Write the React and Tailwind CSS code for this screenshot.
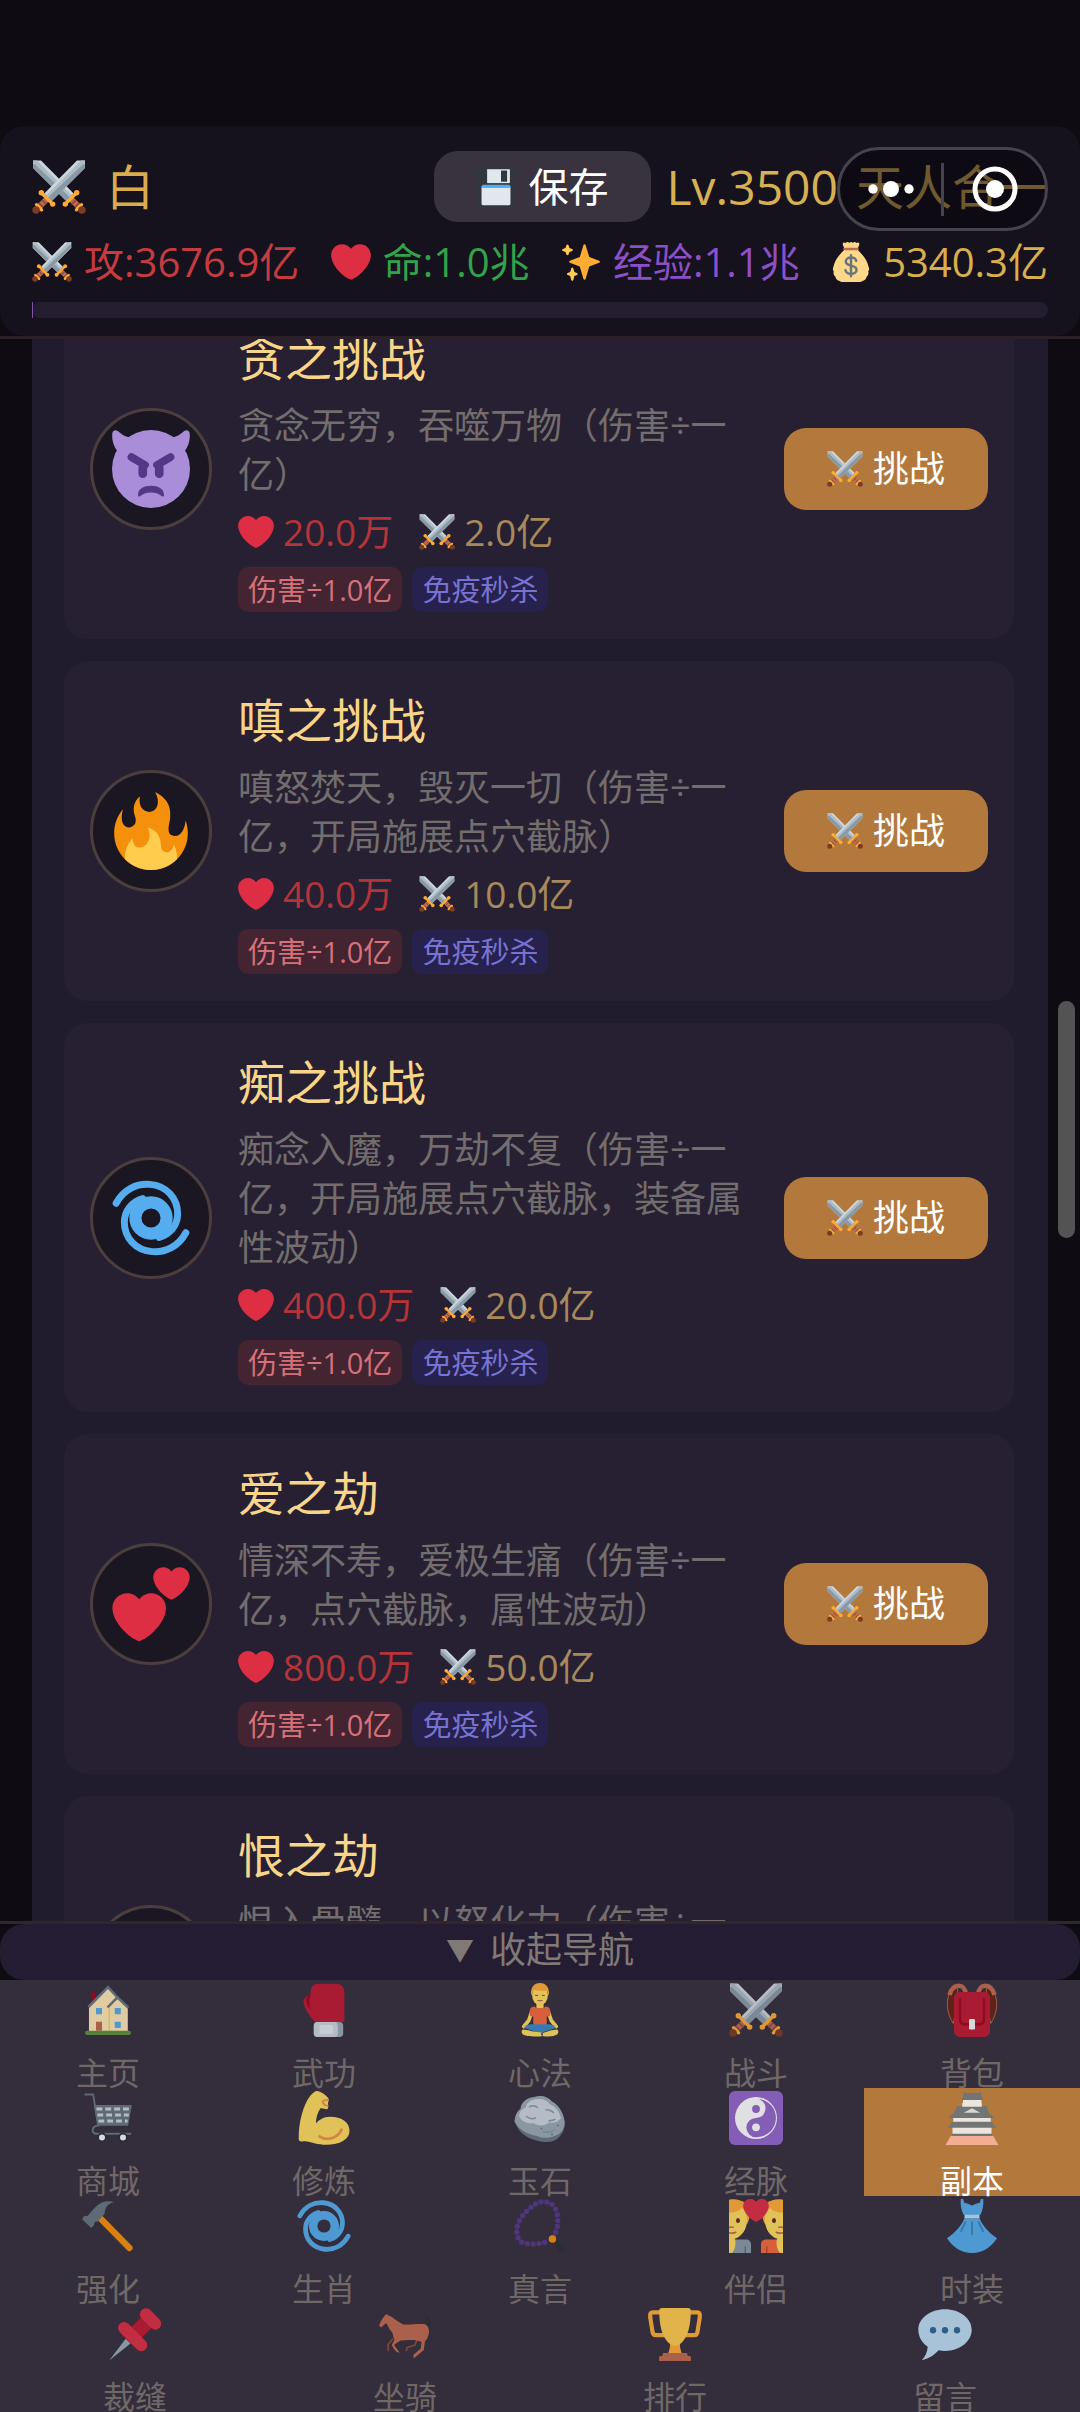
import React from "react";

const HEART =
  "M35.885 11.833c0-5.45-4.418-9.868-9.867-9.868-3.308 0-6.227 1.633-8.018 4.129-1.791-2.496-4.71-4.129-8.017-4.129-5.45 0-9.868 4.417-9.868 9.868 0 .772.098 1.52.266 2.241C1.751 22.587 11.216 31.568 18 34.034c6.783-2.466 16.249-11.447 17.617-19.959.17-.721.268-1.469.268-2.242z";

const Emoji = ({ className, children }) => (
  <svg viewBox="0 0 36 36" aria-hidden="true" className={"shrink-0 " + className}>
    {children}
  </svg>
);

const OneSword = () => (
  <>
    <path fill="#ccd6dd" d="M.7.3H6l21.8 22-5 5L.7 5.4z" />
    <path fill="#8899a6" d="M.7 5.4V3l2-1 22.6 22.8-2.5 2.5z" />
    <path fill="#aebbc5" d="M.7.3h2.6L26.5 23.6l-1.2 1.2L.7 1.6z" />
    <path stroke="#bf6952" strokeWidth="4" d="m26 26 6 6" />
    <path stroke="#8a4b38" strokeWidth="1" d="m26.4 29.6 3-3M28.6 31.6l3-3" />
    <path stroke="#ffac33" strokeWidth="2.2" strokeLinecap="round" d="m22.3 29.3 7.3-7.3M29.6 33.2l3.4-3.4" />
    <circle cx="22.2" cy="29.4" r="1.8" fill="#ffac33" />
    <circle cx="29.8" cy="21.8" r="1.8" fill="#ffac33" />
    <circle cx="33.3" cy="33.3" r="2.5" fill="#7c3b25" />
  </>
);

const Swords = ({ className }) => (
  <Emoji className={className}>
    <OneSword />
    <g transform="translate(36) scale(-1 1)">
      <OneSword />
    </g>
  </Emoji>
);

const Heart = ({ className }) => (
  <Emoji className={className}>
    <path fill="#dd2e44" d={HEART} />
  </Emoji>
);

const Sparkles = ({ className }) => (
  <Emoji className={className}>
    <path fill="#FFAC33" d="M34.347 16.893l-8.899-3.294-3.323-10.891c-.128-.42-.517-.708-.956-.708-.439 0-.828.288-.956.708l-3.322 10.891-8.9 3.294c-.393.146-.653.519-.653.938 0 .418.26.793.653.938l8.895 3.293 3.324 11.223c.126.424.516.715.959.715.442 0 .833-.291.959-.716l3.324-11.223 8.896-3.293c.391-.144.652-.518.652-.937 0-.418-.261-.792-.653-.938z" />
    <path fill="#FFCC4D" d="M14.347 27.894l-2.314-.856-.9-3.3c-.118-.436-.513-.738-.964-.738-.451 0-.846.302-.965.737l-.9 3.3-2.313.856c-.393.146-.653.52-.653.938 0 .418.26.793.653.938l2.301.853.907 3.622c.112.444.511.756.97.756.459 0 .858-.312.97-.757l.907-3.622 2.301-.853c.393-.144.653-.519.653-.937 0-.418-.26-.793-.653-.937zM10.009 6.231l-2.364-.875-.876-2.365c-.145-.393-.519-.653-.938-.653-.418 0-.792.26-.938.653l-.875 2.365-2.365.875c-.393.146-.653.52-.653.938 0 .418.26.793.653.938l2.365.875.875 2.365c.146.393.52.653.938.653.418 0 .792-.26.938-.653l.875-2.365 2.365-.875c.393-.146.653-.52.653-.938 0-.418-.26-.792-.653-.938z" />
  </Emoji>
);

const MoneyBag = ({ className }) => (
  <Emoji className={className}>
    <path fill="#fdd888" d="M12 7C8 11 3.400 16 2.300 22c-.8 1.500-.9 3.200.2 4.500-.6 2 0 3.800 1.500 4.800.2 2 1.700 3.500 3.800 3.700C9 36 10.500 36 12 36h12c1.500 0 3 0 4.200-1 2.100-.2 3.600-1.700 3.800-3.700 1.500-1 2.100-2.800 1.500-4.800 1.100-1.300 1-3 .2-4.500C32.600 16 28 11 24 7z" />
    <path fill="#fdd888" d="M12 6 10.600 2.200C10.300.6 12 0 13.200 1c.9-1.200 2.500-1.200 3.300-.2.8-1 2.300-1 3.100 0 .8-1 2.400-1 3.300.2 1.200-1 2.900-.4 2.600 1.200L24 6z" />
    <rect x="11" y="5.200" width="14" height="2.300" rx="1.100" fill="#bf6952" />
    <path fill="none" stroke="#67757f" strokeWidth="2.200" strokeLinecap="round" d="M22.700 17c-.5-1.900-2.300-3-4.700-3-2.700 0-4.700 1.400-4.700 3.600 0 5 9.700 2.400 9.700 7.400 0 2.200-2.200 3.700-5 3.700-2.700 0-4.600-1.300-5-3.400M18 12v18.800" />
  </Emoji>
);

const Floppy = ({ className }) => (
  <Emoji className={className}>
    <rect width="36" height="36" rx="3" fill="#31373d" />
    <path fill="#e1e8ed" d="M10 2h20.500v12.500H10z" />
    <path fill="#31373d" d="M22.500 3.200H28v10h-5.500z" />
    <path fill="#e1e8ed" d="M5 17.500h26V33a1.500 1.500 0 0 1-1.500 1.500h-23A1.500 1.500 0 0 1 5 33z" />
    <path fill="#55acee" d="M6.500 16h23a1.500 1.500 0 0 1 1.500 1.500V19H5v-1.500A1.500 1.500 0 0 1 6.500 16z" />
  </Emoji>
);

const Imp = ({ className }) => (
  <Emoji className={className}>
    <g fill="#aa8dd8">
      <circle cx="18" cy="18" r="18" />
      <path d="M2.600 10C.4 7-.2 4 .2 1.300.5-.1 1.900-.2 2.800.6 4.300 2 6 3 8 3.500z" />
      <path d="M33.400 10c2.200-3 2.800-6 2.400-8.700-.3-1.400-1.700-1.500-2.600-.7C31.700 2 30 3 28 3.500z" />
    </g>
    <g fill="none" stroke="#553788" strokeLinecap="round">
      <path strokeWidth="3.600" d="m9 12.500 6.200 3.700M27 12.500l-6.200 3.700" />
      <path strokeWidth="4" d="M14.200 17.500v2.700M21.800 17.500v2.700" />
    </g>
    <path fill="#553788" d="M12 30.100c0-3.200 2.800-4.400 6-4.400s6 1.200 6 4.400c0 .8-.8.7-1.300.3-1.300-1-2.700-1.500-4.700-1.500s-3.400.5-4.700 1.500c-.5.4-1.300.5-1.300-.3z" />
  </Emoji>
);

const Fire = ({ className }) => (
  <Emoji className={className}>
    <path fill="#F4900C" d="M35 19c0-2.062-.367-4.039-1.04-5.868-.46 5.389-3.333 8.157-6.335 6.868-2.812-1.208-.917-5.917-.777-8.164.236-3.809-.012-8.169-6.931-11.794 2.875 5.500.333 8.917-2.333 9.125-2.958.231-5.667-2.542-4.667-7.042-3.238 2.386-3.332 6.402-2.333 9 1.042 2.708-.042 4.958-2.583 5.208-2.840.280-4.418-3.041-2.963-8.333C2.520 10.965 1 14.805 1 19c0 9.389 7.611 17 17 17s17-7.611 17-17z" />
    <path fill="#FFCC4D" d="M28.394 23.999c.148 3.084-2.561 4.293-4.019 3.709-2.106-.843-1.541-2.291-2.083-5.291s-2.625-5.083-5.708-6c2.250 6.333-1.247 8.667-3.080 9.084-1.872.426-3.753-.001-3.968-4.007C7.352 23.668 6 26.676 6 30c0 .368.023.730.055 1.090C9.125 34.124 13.342 36 18 36s8.875-1.876 11.945-4.910c.032-.360.055-.722.055-1.090 0-2.187-.584-4.236-1.606-6.001z" />
  </Emoji>
);

const Cyclone = ({ className }) => (
  <Emoji className={className}>
    <g fill="none" stroke="#55acee" strokeLinecap="round">
      <circle cx="18" cy="18" r="7.200" strokeWidth="5.600" />
      <path strokeWidth="3.200" d="M1.900 11.200C5.500 4.600 11.500 2 17.500 2.500c7.800.6 12.800 6.500 12.800 13.500 0 5.500-3.600 9.600-8.500 11" />
      <path strokeWidth="3.200" d="M34.100 24.800C30.500 31.400 24.500 34 18.500 33.500 10.700 32.900 5.700 27 5.700 20c0-5.500 3.600-9.600 8.500-11" />
    </g>
  </Emoji>
);

const TwoHearts = ({ className }) => (
  <Emoji className={className}>
    <path fill="#dd2e44" transform="translate(.1 11.700) scale(.692)" d={HEART} />
    <path fill="#dd2e44" transform="translate(19 .1) scale(.470)" d={HEART} />
  </Emoji>
);

const BrokenHeart = ({ className }) => (
  <Emoji className={className}>
    <path fill="#dd2e44" d={HEART} />
    <path fill="none" stroke="#1a1722" strokeWidth="2" d="m18 6-4 7 7 5-6 6 3 10" />
  </Emoji>
);

const House = ({ className }) => (
  <Emoji className={className}>
    <path fill="#a0041e" d="M6.800 6.200h3V12h-3z" />
    <path fill="#ffe8b6" d="M5.300 15 18 2.800l7 7 6.200 6V32H5.300z" />
    <path fill="#ffcc4d" d="M18.400 16.500h.9V32h-.9z" />
    <path fill="none" stroke="#66757f" strokeWidth="1.700" d="M4.900 16 18 2.800l6.200 6.700M17.700 16.300l6.600-6.800 7.300 7" />
    <path fill="#55acee" d="M10 16.700h4v4.200h-4zM22.500 16.700h4v4.200h-4zM22.500 25.800h4V30h-4z" />
    <path fill="#c1694f" d="M10 25.800h4v6h-4z" />
    <rect x="2.700" y="31.800" width="30.600" height="2.900" rx="1.400" fill="#5c913b" />
  </Emoji>
);

const Glove = ({ className }) => (
  <Emoji className={className}>
    <path fill="#be1931" d="M9 6.500C9 2.500 11 .5 14 .5h12c3.600 0 5.600 2.200 5.600 6V26H12C9 23 5.500 18 4.400 13.500 4 11 5.500 8.500 9 8z" />
    <path fill="#a0041e" d="M9 8c-1 3-1 7 0 10-1.800-2-3.300-5.500-2.800-8C6.800 8.800 7.800 8 9 8z" />
    <rect x="11.200" y="26" width="19.600" height="10" rx="2.500" fill="#99aab5" />
    <rect x="11.200" y="26" width="16" height="10" rx="2.500" fill="#ccd6dd" />
    <rect x="15" y="28" width="9" height="6" rx="1" fill="#e1e8ed" />
  </Emoji>
);

const Lotus = ({ className }) => (
  <Emoji className={className}>
    <path fill="#ffdc5d" d="M15.600 12h4.800v5h-4.800z" />
    <path fill="none" stroke="#ffdc5d" strokeWidth="2.500" strokeLinecap="round" strokeLinejoin="round" d="m12.500 19-2 6-3.300 4M23.500 19l2 6 3.300 4" />
    <path fill="#f4683c" d="M11.200 18.500c0-2 1.300-2.900 3.200-2.900 1 1.400 6.200 1.400 7.200 0 1.900 0 3.200.9 3.200 2.900V22l-2.300.3V29h-9v-6.700l-2.300-.3z" />
    <path fill="#3b88c3" d="M13 27.500h10c3 0 5 1 5.500 2.500L18 33.500 7.500 30c.5-1.500 2.500-2.500 5.500-2.500z" />
    <path fill="#ffdc5d" d="M6.500 31c2 .2 4 .4 6 1.200l6.500.8c1.500.4 1.200 2.700-.8 2.700-4 .1-9.500-.2-11.200-1.200-1.600-1-1.600-2.500-.5-3.500zM29.500 31c-2 .2-4 .4-6 1.200l-5 1.500c.2 1.200 1.500 2 3 2 3 0 6.200-.3 7.500-1.200 1.600-1 1.600-2.500.5-3.500z" />
    <ellipse cx="18" cy="8" rx="5.300" ry="6.800" fill="#ffdc5d" />
    <path fill="#ffac33" d="M12 8.500C11.500 3 14 0 18 0s6.500 3 6 8.500c-.7-1.500-1.300-3-1.500-3.700-2.500.7-6 .5-8.300-.3-.7 1-1.500 2.500-2.200 4z" />
    <path fill="none" stroke="#65471b" strokeWidth=".6" d="M14.800 8.300h1.900M19.300 8.300h1.900" />
    <path fill="#c1694f" d="M16 11.300h4c-.5 1.300-3.500 1.300-4 0z" />
  </Emoji>
);

const Backpack = ({ className }) => (
  <Emoji className={className}>
    <path fill="#662113" stroke="#c1694f" strokeWidth=".6" d="M8 2C1 5-1 17 5.500 27L9 10zM28 2c7 3 9 15 2.500 25L27 10z" />
    <path fill="none" stroke="#c1694f" strokeWidth="3" d="M3 8c1-4 3-6.200 6-6.200 3.500 0 4.500 2.200 5 6M33 8c-1-4-3-6.200-6-6.200-3.500 0-4.500 2.200-5 6" />
    <rect x="6" y="6" width="24" height="30" rx="4" fill="#be1931" />
    <path fill="none" stroke="#a0041e" strokeWidth="1.600" d="M10 10v14c0 2.300 1 3.500 3 3.500h10c2 0 3-1.200 3-3.500V10" />
    <rect x="16" y="24" width="4" height="7" rx=".8" fill="#f5f8fa" />
  </Emoji>
);

const Cart = ({ className }) => (
  <Emoji className={className}>
    <path fill="none" stroke="#66757f" strokeWidth="1.300" d="M2.300 2.300h5.800L11.500 23c-4.500.3-5 5.500-1 5.500h23" />
    <path fill="#66757f" d="M8.500 9.300h25.400l-2.500 13.800H11z" />
    <path stroke="#ccd6dd" strokeWidth="2.100" strokeDasharray="3.900 2" d="M10.300 12h22M10.900 16h21M11.600 20h19.500" />
    <g fill="#f5f8fa" stroke="#292f33" strokeWidth="1.200">
      <circle cx="14" cy="31" r="2.600" />
      <circle cx="28" cy="31" r="2.600" />
    </g>
  </Emoji>
);

const Muscle = ({ className }) => (
  <Emoji className={className}>
    <path fill="#ffdc5d" d="M13.800 0c2.500.6 5 2.300 7 4.600.8 1-.1 2.600-.1 3.900 0 1.300.5 2.200-.5 3.600-1 .4-2.700-.7-4.600-.5-1.800 2.500-3 6-3 10 1.700-2.200 5-4.500 9.500-4.500C29.500 17.100 35 20.500 35 26.500c0 6-6.500 9.300-15.500 9.300-5.500 0-10-1.800-13-2.200-2.500-.3-4.300.6-5.300-1C.7 24 3.500 9.500 9 3 10.500 1.400 12.200-.3 13.800 0z" />
    <path fill="none" stroke="#ef9645" strokeWidth="1.900" strokeLinecap="round" d="M15 30.300c5.500 3.300 12 1.200 14.700-4.500" />
    <path fill="none" stroke="#ef9645" strokeWidth="1.200" strokeLinecap="round" d="M20.500 6c-1.500 0-3 .3-3.500 1.200.7 1.700 2 2.500 3.400 2.700" />
  </Emoji>
);

const Rock = ({ className }) => (
  <Emoji className={className}>
    <path fill="#66757f" d="M1.500 20c1 7 7 11 14 13 6 1.800 12 1.500 15-2 3-3 4.500-7 4-11L20 14z" />
    <path fill="#9aaab4" d="M1 20.500c.3-4 1.500-7 4-8.500 0-4 4-7.500 9-8 5-1.500 9-.5 12 3 4 2 7.500 7 8.300 12.500.4 5-1.800 8-4.300 9.500-5 2.500-10 3-14 1-6-1-12-4-15-9.500z" />
    <path fill="#ccd6dd" d="M4 17c.5-4 2-5 4.500-6 .5-3.500 3.500-5 7-5.500 4-.8 7 .5 9 3.300 4 1.700 6.500 5 7.500 9.200-2 3-5 3.500-8 3-3 2.500-7 2.500-10 .5-4 .5-8-1-10-4.500z" />
    <path fill="none" stroke="#8899a6" strokeWidth="1" strokeLinecap="round" d="M11 10.500c2-1 4-.7 5.500.5M22 12.500c2.500 0 4 .8 5 2M9 17c2 1.500 4 1.800 6 1M20 27c3 1 6 .5 8-1.500M24 20l4-1" />
    <g fill="#66757f">
      <circle cx="19" cy="25" r=".6" />
      <circle cx="30" cy="23" r=".6" />
      <circle cx="26" cy="29" r=".6" />
    </g>
  </Emoji>
);

const YinYang = ({ className }) => (
  <Emoji className={className}>
    <rect width="36" height="36" rx="4" fill="#9266cc" />
    <circle cx="18" cy="18" r="14" fill="#fff" />
    <path fill="#9266cc" d="M20 5.300A12.800 12.800 0 0 1 18 30.800 6.400 6.400 0 0 1 18 18a6.400 6.400 0 0 0 3.300-11.800z" />
    <circle cx="18" cy="12" r="2.600" fill="#9266cc" />
    <circle cx="18" cy="24.200" r="2.600" fill="#fff" />
  </Emoji>
);

const Castle = ({ className }) => (
  <Emoji className={className}>
    <path fill="#f5f8fa" d="M12 5.500h12.300v6H12zM5.500 17h25v4h-25zM5 24h26v6H5z" />
    <path fill="#66757f" d="m12.800 0 1 1.300h9l1-1.300.3 2 1.500 4H11l1.500-4zM8 10h20l1 4.500 4 3.500H2l4-3.500zM5 20.500h26l3.300 4H1.700zM4.500 28.500h27V30h-27z" />
    <path fill="#f5f8fa" d="M11.500 8h13v2.500h-13z" />
    <path fill="#e1e8ed" d="m12.500 14.500 5.500-3 5.500 3z" />
    <path fill="#ffb7a0" d="M3.800 30h28.400l3.400 6H.4z" />
  </Emoji>
);

const Hammer = ({ className }) => (
  <Emoji className={className}>
    <path stroke="#f4900c" strokeWidth="4.200" strokeLinecap="round" d="M13 13 32.300 32.700" />
    <path fill="#66757f" d="M22 2.400c-3.500.2-6 3-6.300 7.600l-4.500 5-2 .3-.6 2.200-1.700 1.800L.8 13.700l1-2.200 2.700-.3C7 8 10 4.500 13 2.800c3-1.600 7-1.700 9-.4z" />
  </Emoji>
);

const Beads = ({ className }) => (
  <Emoji className={className}>
    <path fill="none" stroke="#553788" strokeWidth="3.600" strokeLinecap="round" strokeDasharray="0 3.900" d="M26.500 25.500C31 20 30.500 10 28 6 25 1 18.500.6 14 4 9 7.500 3 14 2.500 20c-.2 5 1.500 8.700 5 9.500 5.500 1 12 .5 16.500-1.500" />
    <path fill="#292f33" d="m27.500 28.500 2-2 5.800 6.500c-.5 1.800-2 3-4.500 2.500z" />
    <circle cx="26.300" cy="26.700" r="2.500" fill="#f4900c" />
  </Emoji>
);

const CoupleHalf = ({ shirt }) => (
  <>
    <path fill="#ffac33" d="M0 .5C7-.8 13.500 2.500 13.800 9c.1 4-.8 6-2 8L0 12z" />
    <path fill="#ffdc5d" d="M0 9c4 0 7-1 8.500-3 3 2 4 6 3.300 10.500C11 22 7 26 3.500 26.500L0 27z" />
    <path fill={shirt} d="M0 27h11c2.500 0 3.700 1.300 3.700 3.500V36H0z" />
    <path fill="#ffdc5d" d="M0 24c2.500.5 4 1.500 4.300 4 .2 3-.3 6-2.300 8H0z" />
    <ellipse cx="6" cy="14.300" rx="1.300" ry="1.700" fill="#662113" />
    <path fill="none" stroke="#c1694f" strokeWidth="1.100" d="M0 18.800h3.200M0 22.500c2 .5 3.500.3 4.800-.5" />
    <path stroke="#00000055" strokeWidth=".8" d="M10.800 31.500V36" />
  </>
);

const Couple = ({ className }) => (
  <Emoji className={className}>
    <CoupleHalf shirt="#8899a6" />
    <g transform="translate(36) scale(-1 1)">
      <CoupleHalf shirt="#f4683c" />
    </g>
    <path fill="#dd2e44" transform="translate(9.400 -1) scale(.478)" d={HEART} />
  </Emoji>
);

const Dress = ({ className }) => (
  <Emoji className={className}>
    <path fill="#55acee" d="M10.500 0h1.600l.8 2.600c2 .2 3.800.8 5.100 1.900 1.300-1.100 3.100-1.700 5.100-1.900l.8-2.600h1.600c.4 4-.4 7.600-2 10.700h-11C10.900 7.600 10.100 4 10.500 0z" />
    <path fill="#bdddf4" d="M13 10.500h10v2.600H13z" />
    <path fill="#55acee" d="M13 13h10c2.500 5.300 6.700 9.800 11.700 13.200C30.500 32.500 25 36 18 36S5.500 32.500 1.300 26.200C6.300 22.800 10.500 18.300 13 13z" />
    <path fill="none" stroke="#3b88c3" strokeWidth="1.300" strokeLinecap="round" d="M18 15.500v8M13.500 15.500l-2.800 6M22.500 15.500l2.800 6" />
  </Emoji>
);

const Pushpin = ({ className }) => (
  <Emoji className={className}>
    <path fill="#99aab5" d="m.8 35.700 11-14.500 3.200 3.200z" />
    <path stroke="#be1931" strokeWidth="10" d="m16.500 19.500 11-11" />
    <path stroke="#dd2e44" strokeWidth="8" strokeLinecap="round" d="m10.700 14 11.500 11.500M25.300 4.800l6.200 6.300" />
  </Emoji>
);

const Horse = ({ className }) => (
  <Emoji className={className}>
    <path fill="#292f33" d="M30.500 12c2.500-1 1.500-4 .8-8 2.500 2 4.700 5 3.700 9zM5 4.500 4 7l5 5 1-1.500z" />
    <path fill="none" stroke="#8a4b38" strokeWidth="1.200" d="m10 21-3.200 4v4.500M26 22l-1.500 3.500-5 1.500-.7 2.500" />
    <path fill="#c1694f" d="M5.500 4.700C4 6 2 9 .7 12.300L2 13.700l3.500-3c1.200 2 2 4.500 4 6.300.7 2.200.7 3.500 1.500 4.800l-1.800 3.400c.5 1.800 2 3.500 3.300 4.800l2 .5c-1-1.800-3-3.500-3.700-5.300l4.200-2.800c3.500-.6 7-.5 10-.3l4 1-.5 4.500-5 4.400.4 2.300 6.600-5.700.8-5.600c2-2 3-5.500 2.600-8-.5-2.500-2-3.700-4-3.700-4.800-.2-9 .8-13 .3C12 9.500 10 6.500 7 5.700z" />
  </Emoji>
);

const Trophy = ({ className }) => (
  <Emoji className={className}>
    <path fill="none" stroke="#ffac33" strokeWidth="2.800" d="M9.500 3.600H3.300C1.200 3.600 1.400 5 1.500 7l1.600 10c.3 1.300 1 1.700 2 1.700h7M26.500 3.600h6.200c2.100 0 1.900 1.400 1.800 3.400l-1.600 10c-.3 1.300-1 1.700-2 1.700h-7" />
    <path fill="#ffac33" d="M14.500 23h7c-.7 3 .2 5.800 1.300 8.500h-9.600c1.100-2.700 2-5.500 1.300-8.500z" />
    <path fill="#ffcc4d" d="M7.500 2.500C7.500 1.200 8.300.7 9.500.7h17c1.200 0 2 .5 2 1.800 0 9-1.500 18-7.500 22.500-2 1-4 1-6 0C9 20.500 7.500 11.500 7.500 2.500z" />
    <path fill="#c1694f" d="M10 30.700h16l.5 2h1.200c.6 0 .9.400.9 1V36H7.400v-2.300c0-.6.3-1 .9-1h1.200z" />
  </Emoji>
);

const Speech = ({ className }) => (
  <Emoji className={className}>
    <path fill="#bdddf4" d="M18 1.500c9.900 0 17.800 6 17.800 13.700S27.900 29.300 18 29.300c-1.500 0-3-.1-4.300-.4C11 32 7 34.800 2.500 35.500 5 33 6.200 30 6.500 26.500 2.700 24 .2 19.800.2 15.200.2 7.500 8.100 1.500 18 1.500z" />
    <g fill="#2a6797">
      <circle cx="10" cy="15.500" r="2.100" />
      <circle cx="18" cy="15.500" r="2.100" />
      <circle cx="26" cy="15.500" r="2.100" />
    </g>
  </Emoji>
);

const stats = [
  { Icon: Swords, text: "攻:3676.9亿", color: "text-[#c53c40]" },
  { Icon: Heart, text: "命:1.0兆", color: "text-[#34a24b]" },
  { Icon: Sparkles, text: "经验:1.1兆", color: "text-[#8b50c6]" },
  { Icon: MoneyBag, text: "5340.3亿", color: "text-[#d8af4d]" },
];

const challenges = [
  { Icon: Imp, title: "贪之挑战", desc: "贪念无穷，吞噬万物（伤害÷一亿）", hp: "20.0万", atk: "2.0亿" },
  { Icon: Fire, title: "嗔之挑战", desc: "嗔怒焚天，毁灭一切（伤害÷一亿，开局施展点穴截脉）", hp: "40.0万", atk: "10.0亿" },
  { Icon: Cyclone, title: "痴之挑战", desc: "痴念入魔，万劫不复（伤害÷一亿，开局施展点穴截脉，装备属性波动）", hp: "400.0万", atk: "20.0亿" },
  { Icon: TwoHearts, title: "爱之劫", desc: "情深不寿，爱极生痛（伤害÷一亿，点穴截脉，属性波动）", hp: "800.0万", atk: "50.0亿" },
  { Icon: BrokenHeart, title: "恨之劫", desc: "恨入骨髓，以怒化力（伤害÷一亿，点穴截脉，属性波动）", hp: "1600.0万", atk: "100.0亿" },
];

const nav = [
  [House, "主页"],
  [Glove, "武功"],
  [Lotus, "心法"],
  [Swords, "战斗"],
  [Backpack, "背包"],
  [Cart, "商城"],
  [Muscle, "修炼"],
  [Rock, "玉石"],
  [YinYang, "经脉"],
  [Castle, "副本", true],
  [Hammer, "强化"],
  [Cyclone, "生肖"],
  [Beads, "真言"],
  [Couple, "伴侣"],
  [Dress, "时装"],
  [Pushpin, "裁缝"],
  [Horse, "坐骑"],
  [Trophy, "排行"],
  [Speech, "留言"],
];

function Header() {
  return (
    <header className="relative shrink-0 border-b-[3px] border-[#2a2025]">
      <div className="rounded-3xl bg-[#15111d] px-8 pt-[25px] pb-[18px]">
        <div className="flex items-center justify-between text-[48px] leading-[70px] text-[#d9ab4e]">
          <h1 className="flex items-center gap-5">
            <Swords className="size-[54px]" />
            <span>白</span>
          </h1>
          <div className="flex items-center gap-4">
            <button type="button" className="flex h-[71px] items-center gap-[13px] rounded-3xl bg-[#393340] px-[42px] text-[40px] text-white">
              <Floppy className="size-10" />
              保存
            </button>
            <p className="flex gap-[18px] whitespace-nowrap text-[#d6b052]">
              <span>Lv.3500</span>
              <span>天人合一</span>
            </p>
          </div>
        </div>
        <ul className="mt-4 flex justify-between text-[40px] leading-[48px]">
          {stats.map(({ Icon, text, color }) => (
            <li key={text} className={"flex items-center gap-3 whitespace-nowrap " + color}>
              <Icon className="size-10" />
              {text}
            </li>
          ))}
        </ul>
        <div role="progressbar" aria-label="经验" aria-valuenow={0} className="mt-4 h-4 rounded-full bg-[#241d30]">
          <div className="h-full w-px bg-[#7e55a8]" />
        </div>
      </div>
      <div className="absolute top-[21px] right-8 flex h-[84px] w-[211px] items-center rounded-full border-[3px] border-[#45434b] bg-[#050409]/50">
        <button type="button" aria-label="更多" className="flex h-full flex-1 items-center justify-center">
          <svg viewBox="0 0 48 18" aria-hidden="true" className="w-12 fill-white">
            <circle cx="6" cy="9" r="4.700" />
            <circle cx="24" cy="9" r="8" />
            <circle cx="42" cy="9" r="4.700" />
          </svg>
        </button>
        <span className="h-[53px] w-[3px] bg-[#45434b]" />
        <button type="button" aria-label="关闭" className="flex h-full flex-1 items-center justify-center">
          <svg viewBox="0 0 46 46" aria-hidden="true" className="size-[46px]">
            <circle cx="23" cy="23" r="20" fill="none" stroke="#fff" strokeWidth="5" />
            <circle cx="23" cy="23" r="9" fill="#fff" />
          </svg>
        </button>
      </div>
    </header>
  );
}

function ChallengeCard({ Icon, title, desc, hp, atk }) {
  return (
    <li className="flex items-center gap-[26px] rounded-3xl bg-[#262032] px-[26px] py-[27px]">
      <div className="flex size-[122px] shrink-0 items-center justify-center rounded-full border-[3px] border-[#4b3e3d] bg-[#1a1722]">
        <Icon className="size-[78px]" />
      </div>
      <div className="min-w-0 flex-1">
        <h2 className="text-[47px] leading-[64px] text-[#f9d58a]">{title}</h2>
        <p className="mt-[11px] text-[36px] leading-[49px] text-[#736d6d]">{desc}</p>
        <div className="mt-2 flex gap-[26px] text-[37px] leading-[49px]">
          <span className="flex items-center gap-[9px] text-[#b43438]">
            <Heart className="size-9" />
            {hp}
          </span>
          <span className="flex items-center gap-[9px] text-[#a8895c]">
            <Swords className="size-9" />
            {atk}
          </span>
        </div>
        <div className="mt-[11px] flex gap-[10px] text-[29px] leading-[45px]">
          <span className="rounded-[10px] bg-[#442430] px-[10px] text-[#d6717b]">伤害÷1.0亿</span>
          <span className="rounded-[10px] bg-[#27214e] px-[10px] text-[#7773d2]">免疫秒杀</span>
        </div>
      </div>
      <button type="button" className="flex h-[82px] shrink-0 items-center gap-[10px] rounded-[22px] bg-[#b3783c] px-[43px] text-[36px] text-white">
        <Swords className="size-9" />
        挑战
      </button>
    </li>
  );
}

export default function App() {
  return (
    <div lang="zh-CN" className="flex h-screen flex-col overflow-hidden bg-[#0f0b12] pt-[126px] font-['Open_Sans','Noto_Sans_CJK_SC',sans-serif]">
      <Header />
      <main className="relative min-h-0 flex-1 overflow-hidden">
        <ul className="mx-8 -mt-10 flex flex-col gap-[22px] bg-[#211b2e] pr-[34px] pl-8">
          {challenges.map((c) => (
            <ChallengeCard key={c.title} {...c} />
          ))}
        </ul>
        <div className="absolute top-[662px] right-[5px] h-[237px] w-[17px] rounded-full bg-[#545354]" />
      </main>
      <footer className="shrink-0 border-t-[3px] border-[#31262c]">
        <button type="button" className="flex h-14 w-full items-center justify-center gap-4 rounded-3xl bg-[#231c33] pb-1 text-[36px] text-[#807975]">
          <span className="text-[28px]">▼</span>
          <span>收起导航</span>
        </button>
        <nav className="flex flex-wrap bg-[#332d3c]">
          {nav.map(([Icon, label, active]) => (
            <a
              key={label}
              href="#"
              aria-current={active ? "page" : undefined}
              className={
                "flex h-[108px] grow basis-1/5 flex-col items-center justify-between pt-[3px] text-[32px] leading-[30px] " +
                (active ? "bg-[#b3783c] text-white" : "text-[#6f6867]")
              }
            >
              <Icon className="size-[54px] opacity-85" />
              {label}
            </a>
          ))}
        </nav>
      </footer>
    </div>
  );
}
